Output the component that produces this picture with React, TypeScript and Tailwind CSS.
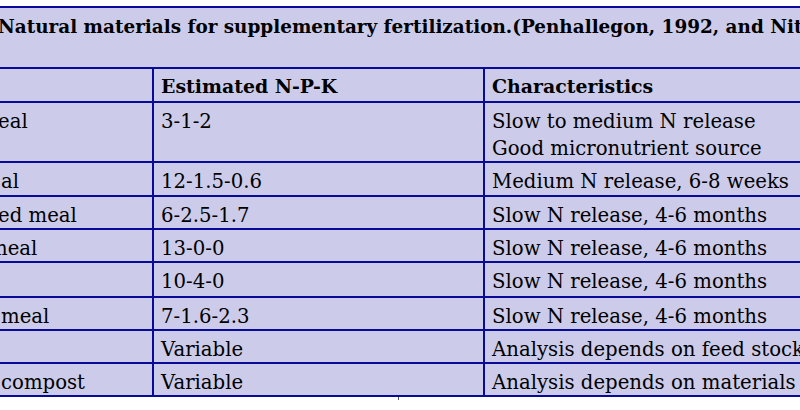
import React from "react";

const rows: { a: React.ReactNode; b: string; c: string[]; h: string }[] = [
  { a: <span className="-ml-[2px]">eal</span>, b: "3-1-2", c: ["Slow to medium N release", "Good micronutrient source"], h: "h-[60px]" },
  { a: <span className="ml-[1px]">al</span>, b: "12-1.5-0.6", c: ["Medium N release, 6-8 weeks"], h: "h-[34px]" },
  { a: <span className="-ml-[2px]">ed meal</span>, b: "6-2.5-1.7", c: ["Slow N release, 4-6 months"], h: "h-[33px]" },
  { a: <span className="-ml-[11px]">meal</span>, b: "13-0-0", c: ["Slow N release, 4-6 months"], h: "h-[33px]" },
  { a: "", b: "10-4-0", c: ["Slow N release, 4-6 months"], h: "h-[35px]" },
  { a: <span className="ml-[1px]">meal</span>, b: "7-1.6-2.3", c: ["Slow N release, 4-6 months"], h: "h-[33px]" },
  { a: "", b: "Variable", c: ["Analysis depends on feed stock"], h: "h-[33px]" },
  { a: <span className="ml-[1px]">compost</span>, b: "Variable", c: ["Analysis depends on materials"], h: "h-[33px]" },
];

export default function App() {
  return (
    <div
      className="relative w-[800px] h-[410px] bg-white overflow-hidden text-black text-[19.7px] leading-[27px]"
      style={{ fontFamily: '"DejaVu Serif", "Liberation Serif", serif' }}
    >
      <div className="mt-[6px] w-[820px] bg-[#ccccea]">
        <div className="h-[63px] border-t-2 border-b-2 border-[#0a0a9a] pt-[5px]">
          <div className="-ml-[2px] font-bold text-[18.4px] whitespace-nowrap">
            Natural materials for supplementary fertilization.(Penhallegon, 1992, and Nitrogen)
          </div>
        </div>
        <div className="flex h-[34px] border-b-2 border-[#0a0a9a]">
          <div className="w-[152px] shrink-0" />
          <div className="w-[331px] shrink-0 border-l-2 border-[#0a0a9a] pl-[7px] pt-[4px] font-bold text-[18.9px]">
            Estimated N-P-K
          </div>
          <div className="flex-1 border-l-2 border-[#0a0a9a] pl-[7px] pt-[4px] font-bold text-[18.9px]">
            Characteristics
          </div>
        </div>
        {rows.map((r, i) => (
          <div key={i} className={`flex ${r.h} border-b-2 border-[#0a0a9a]`}>
            <div className="w-[152px] shrink-0 pt-[5px] whitespace-nowrap overflow-hidden">{r.a}</div>
            <div className="w-[331px] shrink-0 border-l-2 border-[#0a0a9a] pl-[7px] pt-[5px] whitespace-nowrap">
              {r.b}
            </div>
            <div className="flex-1 border-l-2 border-[#0a0a9a] pl-[7px] pt-[5px] whitespace-nowrap">
              {r.c.map((t, j) => (
                <div key={j}>{t}</div>
              ))}
            </div>
          </div>
        ))}
      </div>
      <div className="absolute left-[398px] top-[397px] w-[1px] h-[3px] bg-[#555]" />
    </div>
  );
}
